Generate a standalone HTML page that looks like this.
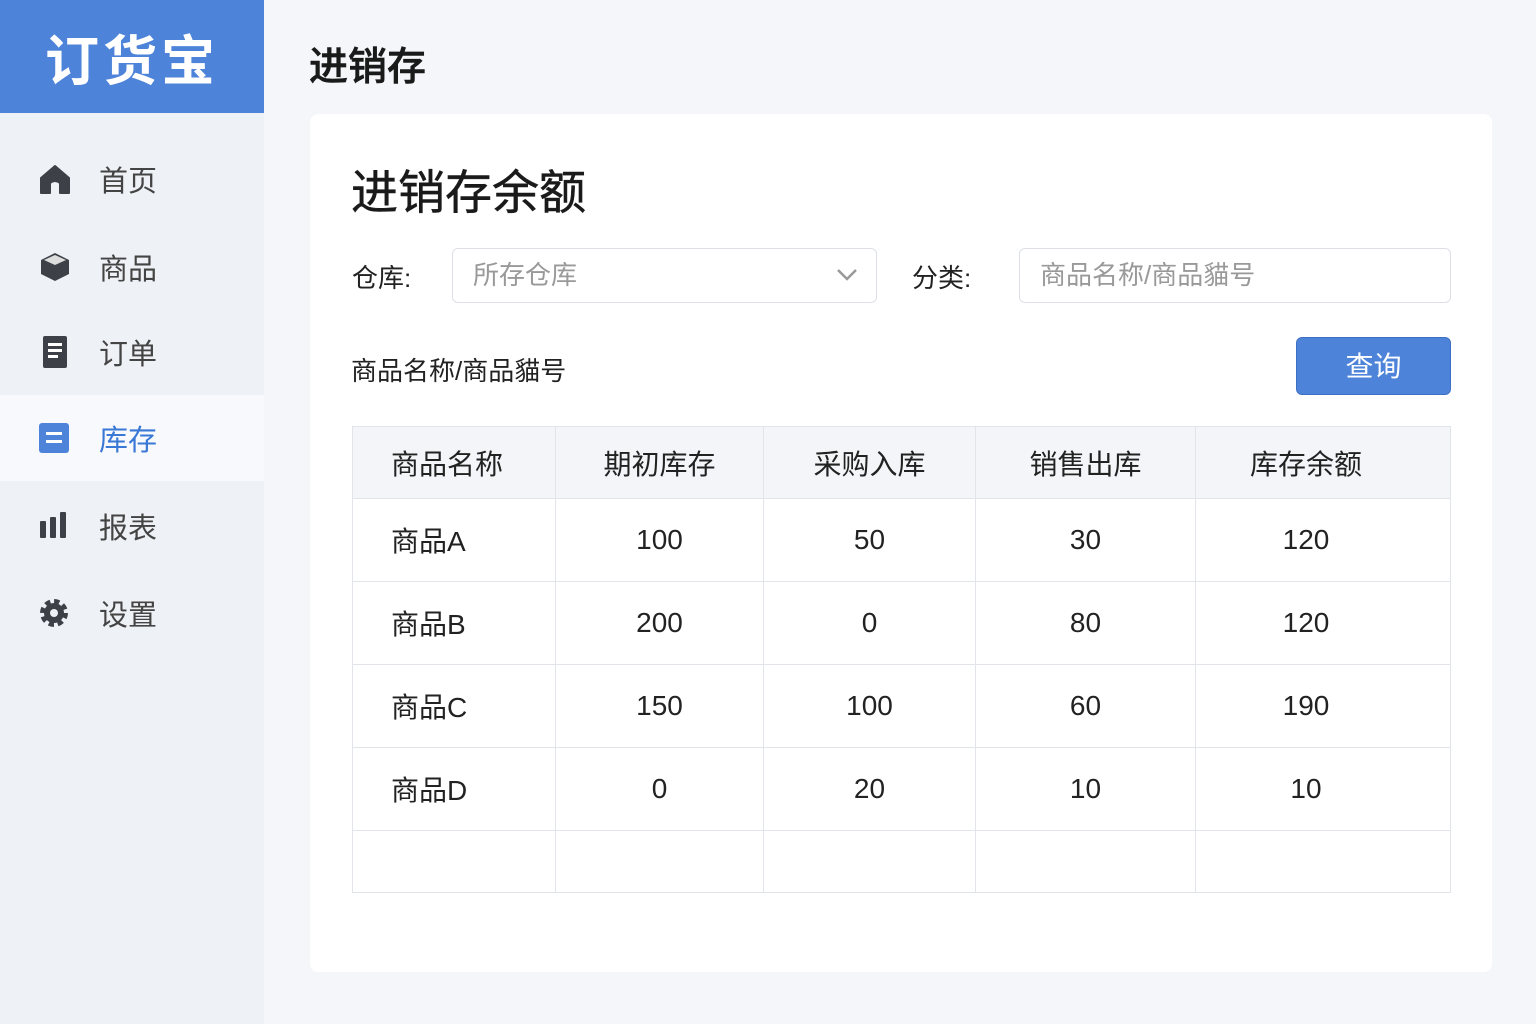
<!DOCTYPE html>
<html><head><meta charset="utf-8"><style>
*{margin:0;padding:0;box-sizing:border-box}
body{width:1536px;height:1024px;background:#f4f6f9;font-family:"Liberation Sans","Noto Sans CJK SC",sans-serif;position:relative;overflow:hidden;color:#222}
.side{position:absolute;left:0;top:0;width:264px;height:1024px;background:#eef1f5}
.logo{height:113px;background:#4d83d9;color:#fff;font-size:54px;font-weight:bold;text-align:center;line-height:124px;letter-spacing:4px}
.item{position:absolute;left:0;width:264px;height:86px;display:flex;align-items:center;font-size:29px;color:#444}
.item .ic{position:absolute;left:38px;width:34px;height:34px}
.item span{position:absolute;left:99px}
.item.act{background:#f7f9fc;color:#3a78d6}
.title{position:absolute;left:309px;top:36px;font-size:39px;color:#1a1a1a;font-weight:500;-webkit-text-stroke:0.6px #1a1a1a}
.card{position:absolute;left:310px;top:114px;width:1182px;height:858px;background:#fff;border-radius:8px}
.h1{position:absolute;left:351px;top:154px;font-size:47px;color:#1a1a1a;-webkit-text-stroke:0.5px #1a1a1a}
.lbl{position:absolute;font-size:26px;color:#222}
.inp{position:absolute;height:55px;border:1.5px solid #dde0e5;border-radius:6px;font-size:26px;color:#999;padding-left:20px;line-height:52px}
.btn{position:absolute;left:1296px;top:337px;width:155px;height:58px;background:#4d83d9;border-radius:6px;color:#fff;font-size:28px;text-align:center;line-height:58px;border:1px solid #3d70c2}
table{position:absolute;left:352px;top:426px;width:1099px;border-collapse:collapse;font-size:28px;border:1.5px solid #e1e4e8}
td,th{border:1.5px solid #e1e4e8;text-align:center;font-weight:normal}
th{background:#f3f5f8;height:72px}
td{height:83px}
td:first-child,th:first-child{text-align:left;padding-left:38px}
td:last-child,th:last-child{padding-right:34px}
tr.e td{height:62px}
</style></head><body>
<div class="side">
<div class="logo">订货宝</div>
<div class="item" style="top:136px"><svg class="ic" viewBox="0 0 34 34"><path d="M3 16 L17 4 L31 16 V31 H22 V21 Q17 17 12 21 V31 H3Z" fill="#3d4147" stroke="#3d4147" stroke-linejoin="round" stroke-width="2"/></svg><span>首页</span></div>
<div class="item" style="top:224px"><svg class="ic" viewBox="0 0 34 34"><path d="M17 3 L31 10 V24 L17 31 L3 24 V10Z" fill="#3d4147"/><path d="M17 5 L28 10 L17 15 L6 10Z" fill="#ddd"/></svg><span>商品</span></div>
<div class="item" style="top:309px"><svg class="ic" viewBox="0 0 34 34"><rect x="5" y="1" width="24" height="32" rx="2" fill="#3d4147"/><rect x="10" y="8" width="14" height="3" fill="#fff"/><rect x="10" y="14" width="14" height="3" fill="#fff"/><rect x="10" y="20" width="10" height="3" fill="#fff"/></svg><span>订单</span></div>
<div class="item act" style="top:395px"><svg class="ic" viewBox="0 0 34 34"><rect x="1" y="2" width="30" height="30" rx="3" fill="#4d83d9"/><rect x="8" y="11" width="16" height="3" fill="#fff"/><rect x="8" y="19" width="16" height="3" fill="#fff"/></svg><span>库存</span></div>
<div class="item" style="top:483px"><svg class="ic" viewBox="0 0 34 34"><rect x="2" y="12" width="6" height="17" rx="1" fill="#3d4147"/><rect x="12" y="8" width="6" height="21" rx="1" fill="#3d4147"/><rect x="22" y="3" width="6" height="26" rx="1" fill="#3d4147"/></svg><span>报表</span></div>
<div class="item" style="top:570px"><svg class="ic" viewBox="0 0 34 34"><circle cx="16" cy="17" r="11" fill="none" stroke="#3d4147" stroke-width="6" stroke-dasharray="5 3.6"/><circle cx="16" cy="17" r="10" fill="#3d4147"/><circle cx="16" cy="17" r="4" fill="#eef1f5"/></svg><span>设置</span></div>
</div>
<div class="title">进销存</div>
<div class="card"></div>
<div class="h1">进销存余额</div>
<div class="lbl" style="left:352px;top:258px">仓库:</div>
<div class="inp" style="left:452px;top:248px;width:425px">所存仓库<svg style="position:absolute;right:18px;top:19px" width="22" height="14" viewBox="0 0 22 14"><path d="M2 2 L11 11 L20 2" fill="none" stroke="#999" stroke-width="2.5"/></svg></div>
<div class="lbl" style="left:912px;top:258px">分类:</div>
<div class="inp" style="left:1019px;top:248px;width:432px">商品名称/商品貓号</div>
<div class="lbl" style="left:351px;top:351px">商品名称/商品貓号</div>
<div class="btn">查询</div>
<table>
<tr><th style="width:203px">商品名称</th><th style="width:208px">期初库存</th><th style="width:212px">采购入库</th><th style="width:220px">销售出库</th><th>库存余额</th></tr>
<tr><td>商品A</td><td>100</td><td>50</td><td>30</td><td>120</td></tr>
<tr><td>商品B</td><td>200</td><td>0</td><td>80</td><td>120</td></tr>
<tr><td>商品C</td><td>150</td><td>100</td><td>60</td><td>190</td></tr>
<tr><td>商品D</td><td>0</td><td>20</td><td>10</td><td>10</td></tr>
<tr class="e"><td></td><td></td><td></td><td></td><td></td></tr>
</table>
</body></html>
